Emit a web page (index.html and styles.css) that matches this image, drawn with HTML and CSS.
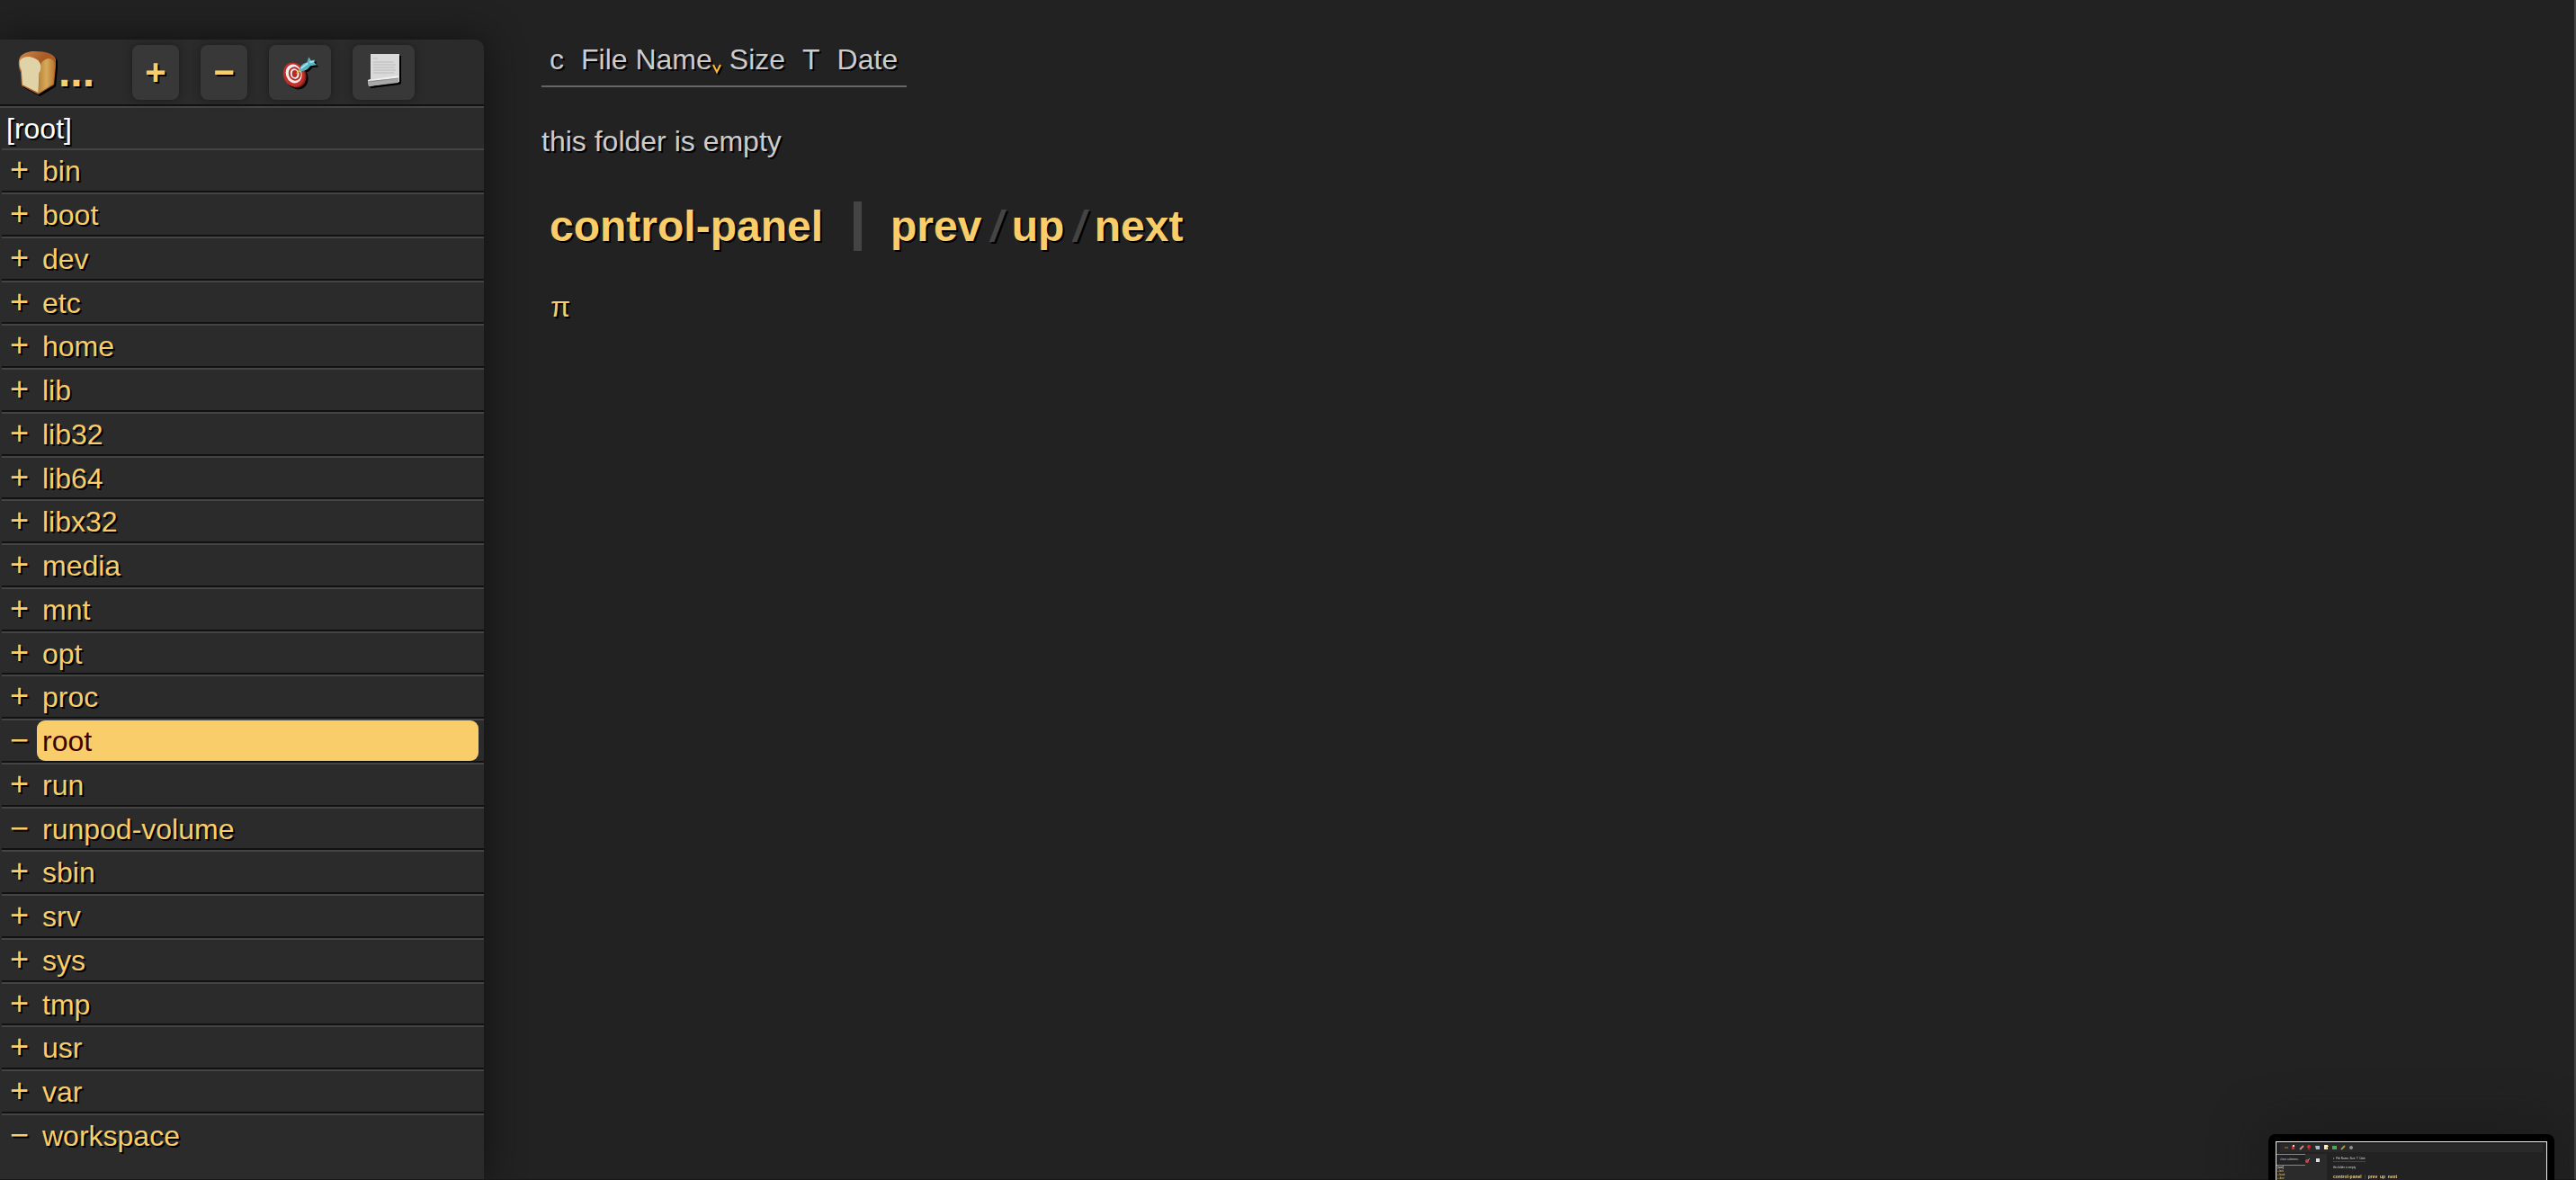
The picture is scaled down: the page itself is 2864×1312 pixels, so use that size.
FILE: index.html
```html
<!DOCTYPE html>
<html lang="en">
<head>
<meta charset="utf-8">
<title>/root/</title>
<link rel="stylesheet" href="styles.css">
</head>
<body>
<nav class="tree" aria-label="Folder tree">
  <div class="tools">
    <a class="crumbs" href="#top" aria-label="breadcrumbs">
      <svg class="bread" viewBox="0 0 44 50" aria-hidden="true">
        <defs>
          <linearGradient id="crust" x1="0" y1="0" x2="1" y2="1"><stop offset="0" stop-color="#cf8a4c"/><stop offset=".4" stop-color="#ab5c26"/><stop offset="1" stop-color="#a85f28"/></linearGradient>
          <linearGradient id="side" x1="0" y1="0" x2="1" y2="0"><stop offset="0" stop-color="#b98238"/><stop offset=".5" stop-color="#d6ab5a"/><stop offset="1" stop-color="#b4732f"/></linearGradient>
        </defs>
        <path d="M1 10Q3 1 18 0Q40 0 43 9L43 17L41 38L23 49L4 39L3 24Q0 17 1 10Z" fill="url(#crust)"/>
        <path d="M25 17Q27 9 35 8Q42 9 42 16L40 37L23 48Z" fill="url(#side)"/>
        <path d="M2 11Q4 6 13 6Q25 8 26 17Q26 22 24 25L23 47L5 38L4 22Q1 16 2 11Z" fill="#e0d3a8"/>
      </svg><span>...</span></a>
    <button class="btn">+</button>
    <button class="btn">−</button>
    <button class="btn wide" aria-label="Go to current folder">
      <svg class="dart" viewBox="0 0 40 36" aria-hidden="true">
        <ellipse cx="15" cy="21" rx="12" ry="14" transform="rotate(-20 15 21)" fill="#8e1d1b"/>
        <ellipse cx="13" cy="20" rx="12" ry="14" transform="rotate(-20 13 20)" fill="#c22e28"/>
        <ellipse cx="13" cy="19" rx="9" ry="11" transform="rotate(-20 13 19)" fill="#f3eeee"/>
        <ellipse cx="14" cy="19" rx="7" ry="8" transform="rotate(-20 14 19)" fill="#b82a26"/>
        <ellipse cx="14" cy="19" rx="5" ry="6" transform="rotate(-20 14 19)" fill="#f3eeee"/>
        <ellipse cx="14" cy="19" rx="3" ry="4" fill="#b82a26"/>
        <path d="M15 19L20 13L23 16Z" fill="#d8b23c"/>
        <path d="M20 14Q20 8 28 6L30 0L33 4L37 3L36 6L39 9L32 10Q28 16 21 16Z" fill="#56b3c2"/>
        <path d="M21 13L29 7M31 6L36 5" stroke="#a5e2e8" stroke-width="2" fill="none"/>
      </svg>
    </button>
    <button class="btn wide" aria-label="Dock the tree">
      <svg class="scroll" viewBox="0 0 36 36" aria-hidden="true">
        <path d="M3 0H35V31L1 36L0 29L3 28Z" fill="#d9d9d9"/>
        <path d="M6 5H11M6 9H28M6 12H31M6 15H30M6 18H31M6 21H29" stroke="#bbb"/>
        <path d="M0 29L34 24V29L1 34Z" fill="#f0f0f0"/>
        <path d="M0 30L34 27V32L1 36Z" fill="#a8a8a8"/>
        <path d="M1 31L34 27" stroke="#8e8e8e"/>
      </svg>
    </button>
  </div>
  <a class="top" id="top" href="#top">[root]</a>
  <ul class="list">
    <li><a class="tog" href="#bin">+</a><a class="dir" href="#bin">bin</a></li>
    <li><a class="tog" href="#boot">+</a><a class="dir" href="#boot">boot</a></li>
    <li><a class="tog" href="#dev">+</a><a class="dir" href="#dev">dev</a></li>
    <li><a class="tog" href="#etc">+</a><a class="dir" href="#etc">etc</a></li>
    <li><a class="tog" href="#home">+</a><a class="dir" href="#home">home</a></li>
    <li><a class="tog" href="#lib">+</a><a class="dir" href="#lib">lib</a></li>
    <li><a class="tog" href="#lib32">+</a><a class="dir" href="#lib32">lib32</a></li>
    <li><a class="tog" href="#lib64">+</a><a class="dir" href="#lib64">lib64</a></li>
    <li><a class="tog" href="#libx32">+</a><a class="dir" href="#libx32">libx32</a></li>
    <li><a class="tog" href="#media">+</a><a class="dir" href="#media">media</a></li>
    <li><a class="tog" href="#mnt">+</a><a class="dir" href="#mnt">mnt</a></li>
    <li><a class="tog" href="#opt">+</a><a class="dir" href="#opt">opt</a></li>
    <li><a class="tog" href="#proc">+</a><a class="dir" href="#proc">proc</a></li>
    <li><a class="tog" href="#root">−</a><a class="dir here" href="#root">root</a></li>
    <li><a class="tog" href="#run">+</a><a class="dir" href="#run">run</a></li>
    <li><a class="tog" href="#runpod-volume">−</a><a class="dir" href="#runpod-volume">runpod-volume</a></li>
    <li><a class="tog" href="#sbin">+</a><a class="dir" href="#sbin">sbin</a></li>
    <li><a class="tog" href="#srv">+</a><a class="dir" href="#srv">srv</a></li>
    <li><a class="tog" href="#sys">+</a><a class="dir" href="#sys">sys</a></li>
    <li><a class="tog" href="#tmp">+</a><a class="dir" href="#tmp">tmp</a></li>
    <li><a class="tog" href="#usr">+</a><a class="dir" href="#usr">usr</a></li>
    <li><a class="tog" href="#var">+</a><a class="dir" href="#var">var</a></li>
    <li><a class="tog" href="#workspace">−</a><a class="dir" href="#workspace">workspace</a></li>
  </ul>
</nav>
<main class="files">
  <table class="listing">
    <thead><tr><th>c</th><th class="sorted">File Name<svg class="mark" viewBox="0 0 10 12" aria-hidden="true"><path d="M1 1L5 9L9 1" fill="none" stroke="#fb3" stroke-width="2"/></svg></th><th>Size</th><th>T</th><th>Date</th></tr></thead>
  </table>
  <p class="empty">this folder is empty</p>
  <div class="nav">
    <a href="#cp">control-panel</a>
    <span class="bar"></span>
    <a href="#prev">prev</a><i>/</i><a href="#up">up</a><i>/</i><a href="#next">next</a>
  </div>
  <a class="pi" href="#pi">π</a>
</main>
<aside class="preview" aria-label="Window preview">
  <div class="screen">
    <div class="mini-menu">
      <svg viewBox="0 0 80 6" aria-hidden="true">
        <path d="M1 3H5" stroke="#a8843c"/>
        <path d="M9 1H12V5H9Z" fill="#b33"/><path d="M10 0H12V2H10Z" fill="#ddd"/>
        <path d="M18 5L22 1" stroke="#c88" stroke-width="2"/>
        <circle cx="28" cy="2" r="2" fill="#e22"/><path d="M28 3V6" stroke="#a33"/>
        <path d="M35 1H40V5H36Z" fill="#a9bcc8"/>
        <path d="M45 0H49V5H45Z" fill="#eee"/><path d="M47 4L50 1" stroke="#da3"/>
        <path d="M54 1H59V5H54Z" fill="#4a5"/>
        <path d="M64 5L68 1" stroke="#a93" stroke-width="2"/>
        <circle cx="75" cy="3" r="2" fill="#89929c"/>
      </svg>
    </div>
    <div class="mini-body">
      <div class="mini-side">
        <div class="mini-tip">close submenu</div>
        <svg class="mini-icons" viewBox="0 0 16 6" aria-hidden="true"><circle cx="2" cy="4" r="2" fill="#c44"/><path d="M3 3L5 1" stroke="#6bc"/><path d="M12 1H16V5H12Z" fill="#ddd"/></svg>
        <ul><li class="mini-root">[root]</li><li>+ bin</li><li>+ boot</li><li>+ dev</li></ul>
      </div>
      <div class="mini-main">
        <span class="mini-head">c &nbsp;File Name, Size &nbsp;T &nbsp;Date</span>
        <span>this folder is empty</span>
        <b>control-panel &nbsp;<i>|</i>&nbsp; prev &nbsp;up &nbsp;next</b>
      </div>
    </div>
  </div>
</aside>
</body>
</html>
```
FILE: styles.css
```css
* { box-sizing: border-box; }

body {
  margin: 0;
  min-height: 100vh;
  display: flex;
  background: #222;
  border-right: 2px solid #444;
  border-bottom: 1px solid #201418;
  color: #ccc;
  font: 32px/45px "Liberation Sans", Arial, sans-serif;
  text-shadow: 2px 2px 0 #000;
}

a { color: #f9ce6a; text-decoration: none; }
svg { display: block; filter: drop-shadow(2px 2px 0 #000); }

/* folder tree */
.tree {
  flex: none;
  width: 538px;
  margin-top: 44px;
  background: #2b2b2b;
  border-radius: 0 10px 0 0;
  box-shadow: 0 0 40px #111;
}

.tools {
  display: flex;
  align-items: flex-start;
  height: 74px;
  padding: 6px 0 0 20px;
  border-bottom: 2px solid #111;
}

.crumbs {
  display: flex;
  gap: 2px;
  width: 127px;
  padding-top: 7px;
  font-size: 48px;
  font-weight: bold;
}

.bread { width: 43px; height: 49px; }

.btn {
  display: flex;
  align-items: center;
  justify-content: center;
  width: 52px;
  height: 61px;
  margin: 0 24px 0 0;
  padding: 0;
  border: 0;
  border-radius: 8px;
  background: #383838;
  box-shadow: 0 0 10px #1c1c1c;
  color: #f9ce6a;
  font: bold 40px/45px "Liberation Sans", Arial, sans-serif;
  text-shadow: 2px 2px 0 #000;
}

.wide { width: 69px; }
.dart { width: 39px; height: 36px; }
.scroll { width: 36px; height: 36px; margin-bottom: 6px; }

.top {
  display: block;
  height: 47px;
  padding-left: 7px;
  border-top: 2px solid #444;
  color: #fff;
  line-height: 47px;
}

.list { margin: 0 0 0 2px; padding: 0; list-style: none; line-height: 47px; }

.list li {
  display: flex;
  height: 49px;
  border-top: 2px solid #444;
  border-bottom: 2px solid #111;
}

.list li:nth-child(4n) { height: 48px; }
.list li:last-child { border-bottom: 0; }
.tog { width: 39px; padding-left: 9px; font-size: 36px; line-height: 43px; }
.dir { flex: 1; margin-right: 6px; padding-left: 6px; border-radius: 9px; }
.here { background: #f9ce6a; color: #400; text-shadow: none; }

/* file listing */
.files { flex: 1; padding: 44px 0 0 64px; }
.listing { border-collapse: collapse; border-bottom: 2px solid #666; }
.listing th { padding: 0 10px 6px 9px; font-weight: normal; text-align: left; }
.sorted { position: relative; }
.mark { position: absolute; right: 0; bottom: 12px; width: 10px; height: 12px; }
.empty { margin: 38px 0 0; }

.nav {
  display: flex;
  align-items: center;
  margin-top: 44px;
  padding-left: 9px;
  font-size: 48px;
  line-height: 55px;
  font-weight: bold;
}

.nav i { margin: 0 10px; color: #444; }
.bar { width: 9px; height: 55px; margin: 0 32px 0 34px; background: #444; }
.pi { display: inline-block; margin: 40px 0 0 10px; }

/* floating preview */
.preview {
  position: fixed;
  right: 24px;
  bottom: 0;
  width: 318px;
  height: 51px;
  padding: 8px 8px 0;
  overflow: hidden;
  border-radius: 8px 8px 0 0;
  background: #000;
  box-shadow: 0 0 60px #1a1a1a;
  font-size: 3px;
  line-height: 5px;
  text-shadow: none;
}

.preview svg { filter: none; }

.screen {
  height: 100%;
  padding-top: 2px;
  overflow: hidden;
  border: 1px solid #eee;
  border-bottom: 0;
  background: #222;
}

.mini-menu { margin: 0 4px; height: 9px; padding: 1px 4px; background: #292929; }
.mini-menu svg { width: 80px; height: 6px; }
.mini-body { display: flex; gap: 7px; padding-top: 2px; }
.mini-side { display: grid; grid-template-columns: 32px 24px; align-content: start; width: 56px; height: 40px; background: #2b2b2b; }
.mini-tip { height: 13px; padding: 3px 0 0 4px; border-top: 1px solid #888; border-bottom: 1px solid #888; background: #222; }
.mini-icons { width: 16px; height: 6px; margin-top: 4px; }
.mini-side ul { margin: 0; padding: 0 1px; list-style: none; color: #f9ce6a; line-height: 4px; }
.mini-side .mini-root { color: #eee; }
.mini-main { display: flex; flex-direction: column; align-items: flex-start; padding-top: 3px; color: #ddd; }
.mini-head { margin-bottom: 4px; border-bottom: 1px solid #444; }
.mini-main b { margin-top: 4px; color: #f9ce6a; font-size: 5px; line-height: 6px; }
.mini-main i { color: #555; }
```
